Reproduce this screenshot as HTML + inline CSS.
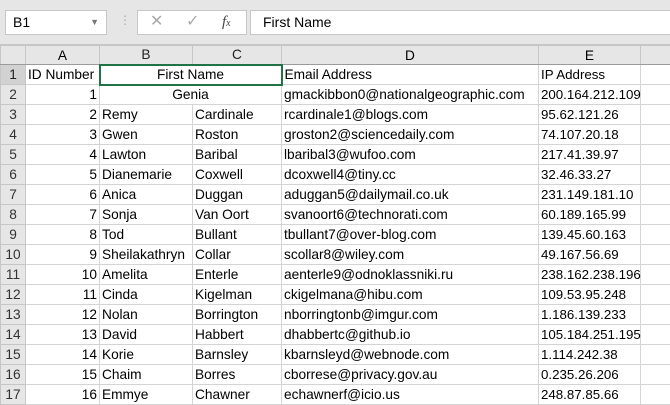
<!DOCTYPE html>
<html><head><meta charset="utf-8"><style>
*{margin:0;padding:0;box-sizing:border-box}
body{width:670px;height:400px;overflow:hidden;background:#fff;font-family:"Liberation Sans",sans-serif;position:relative;color:#000}
.top{position:absolute;left:0;top:0;width:670px;height:45px;background:#e6e6e6;border-bottom:1px solid #c6c6c6}
.box{position:absolute;background:#fff;border:1px solid #c6c6c6;top:10px;height:25px}
table{position:absolute;left:0;top:45px;border-collapse:collapse;table-layout:fixed;width:680px}
td{height:20px;border:1px solid #d4d4d4;font-size:13.7px;white-space:nowrap;overflow:hidden;padding:0 2px;line-height:18px}
td.e{overflow:visible;font-size:13.3px}
td.h{background:#e6e6e6;text-align:center;color:#333;border-color:#c6c6c6}
td.hs{background:#d2d2d2;color:#222}
tr.hd td{height:19px;line-height:17px;background:#e6e6e6;text-align:center;border-color:#c6c6c6;border-bottom:1px solid #9b9b9b}
td.r{text-align:right}
</style></head><body>
<div class="top"></div>
<div class="box" style="left:5px;width:102px;font-size:14px;line-height:22px;padding-left:7px">B1<span style="position:absolute;right:7px;top:0;font-size:9px;color:#777">▼</span></div>
<div style="position:absolute;left:119px;top:13px;color:#aaa;font-size:12px">⋮</div>
<div class="box" style="left:137px;width:110px;color:#aaa;font-size:16px;line-height:22px">
<span style="position:absolute;left:12px">✕</span><span style="position:absolute;left:48px">✓</span><span style="position:absolute;left:84px;color:#444;font-style:italic;font-family:'Liberation Serif',serif;font-size:15px">f<span style="font-size:10px">x</span></span></div>
<div class="box" style="left:250px;width:425px;font-size:14px;line-height:22px;padding-left:12px">First Name</div>
<table>
<colgroup><col style="width:25px"><col style="width:74px"><col style="width:93px"><col style="width:89px"><col style="width:257px"><col style="width:102px"><col style="width:40px"></colgroup>
<tr class="hd"><td style="background:#e6e6e6"></td><td>A</td><td class="hs">B</td><td class="hs">C</td><td>D</td><td>E</td><td></td></tr>
<tr><td class="h hs">1</td><td>ID Number</td><td colspan="2" style="text-align:center;border:2px solid #217346">First Name</td><td>Email Address</td><td class="e">IP Address</td><td></td></tr>
<tr><td class="h">2</td><td class="r">1</td><td colspan="2" style="text-align:center">Genia</td><td>gmackibbon0@nationalgeographic.com</td><td class="e">200.164.212.109</td><td></td></tr>
<tr><td class="h">3</td><td class="r">2</td><td>Remy</td><td>Cardinale</td><td>rcardinale1@blogs.com</td><td class="e">95.62.121.26</td><td></td></tr>
<tr><td class="h">4</td><td class="r">3</td><td>Gwen</td><td>Roston</td><td>groston2@sciencedaily.com</td><td class="e">74.107.20.18</td><td></td></tr>
<tr><td class="h">5</td><td class="r">4</td><td>Lawton</td><td>Baribal</td><td>lbaribal3@wufoo.com</td><td class="e">217.41.39.97</td><td></td></tr>
<tr><td class="h">6</td><td class="r">5</td><td>Dianemarie</td><td>Coxwell</td><td>dcoxwell4@tiny.cc</td><td class="e">32.46.33.27</td><td></td></tr>
<tr><td class="h">7</td><td class="r">6</td><td>Anica</td><td>Duggan</td><td>aduggan5@dailymail.co.uk</td><td class="e">231.149.181.10</td><td></td></tr>
<tr><td class="h">8</td><td class="r">7</td><td>Sonja</td><td>Van Oort</td><td>svanoort6@technorati.com</td><td class="e">60.189.165.99</td><td></td></tr>
<tr><td class="h">9</td><td class="r">8</td><td>Tod</td><td>Bullant</td><td>tbullant7@over-blog.com</td><td class="e">139.45.60.163</td><td></td></tr>
<tr><td class="h">10</td><td class="r">9</td><td>Sheilakathryn</td><td>Collar</td><td>scollar8@wiley.com</td><td class="e">49.167.56.69</td><td></td></tr>
<tr><td class="h">11</td><td class="r">10</td><td>Amelita</td><td>Enterle</td><td>aenterle9@odnoklassniki.ru</td><td class="e">238.162.238.196</td><td></td></tr>
<tr><td class="h">12</td><td class="r">11</td><td>Cinda</td><td>Kigelman</td><td>ckigelmana@hibu.com</td><td class="e">109.53.95.248</td><td></td></tr>
<tr><td class="h">13</td><td class="r">12</td><td>Nolan</td><td>Borrington</td><td>nborringtonb@imgur.com</td><td class="e">1.186.139.233</td><td></td></tr>
<tr><td class="h">14</td><td class="r">13</td><td>David</td><td>Habbert</td><td>dhabbertc@github.io</td><td class="e">105.184.251.195</td><td></td></tr>
<tr><td class="h">15</td><td class="r">14</td><td>Korie</td><td>Barnsley</td><td>kbarnsleyd@webnode.com</td><td class="e">1.114.242.38</td><td></td></tr>
<tr><td class="h">16</td><td class="r">15</td><td>Chaim</td><td>Borres</td><td>cborrese@privacy.gov.au</td><td class="e">0.235.26.206</td><td></td></tr>
<tr><td class="h">17</td><td class="r">16</td><td>Emmye</td><td>Chawner</td><td>echawnerf@icio.us</td><td class="e">248.87.85.66</td><td></td></tr>
</table>
</body></html>
